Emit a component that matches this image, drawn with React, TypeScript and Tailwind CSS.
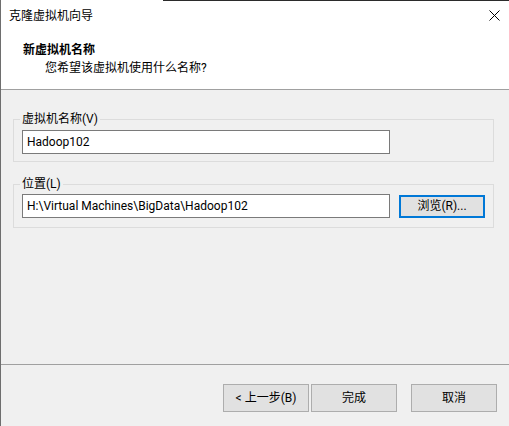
import React from 'react';

const font = { fontFamily: 'Roboto, "Noto Sans CJK SC", sans-serif' };

const CloseIcon = () => (
  <svg width="11" height="11" viewBox="0 0 11 11" className="block">
    <path d="M0.5 0.5 L10.5 10.5 M10.5 0.5 L0.5 10.5" stroke="#000" strokeWidth="1" fill="none" />
  </svg>
);

const DialogButton: React.FC<{ label: string; className?: string }> = ({ label, className }) => (
  <button
    type="button"
    className={`h-[28px] w-[86px] bg-[#e1e1e1] border border-[#adadad] text-[12px] leading-none text-black ${className ?? ''}`}
  >
    {label}
  </button>
);

const App: React.FC = () => {
  return (
    <div
      className="w-[509px] h-[426px] bg-[#f0f0f0] border-l border-[#6e6e6e] flex flex-col text-[12px] leading-[16px] text-black overflow-hidden"
      style={font}
    >
      {/* top edge */}
      <div className="h-px flex shrink-0">
        <div className="w-[162px] bg-white" />
        <div className="flex-1 bg-[#2b2b2b]" />
      </div>

      {/* title bar */}
      <div className="h-[29px] bg-white flex items-center justify-between pl-[8px] pr-[9px] shrink-0">
        <span>克隆虚拟机向导</span>
        <CloseIcon />
      </div>

      {/* wizard header */}
      <div className="bg-white pt-[12px] pb-[13px] shrink-0">
        <div className="pl-[22px] font-bold">新虚拟机名称</div>
        <div className="pl-[44px] mt-[2px]">您希望该虚拟机使用什么名称?</div>
      </div>
      <div className="h-px bg-[#a0a0a0] shrink-0" />

      {/* content */}
      <div className="flex flex-col gap-[14px] mt-[21px] ml-[12px] w-[481px]">
        <fieldset className="border border-[#dcdcdc] pl-[8px] pt-[3px] pb-[7px]">
          <legend className="px-[2px] -ml-[2px]">虚拟机名称(V)</legend>
          <div className="w-[368px] h-[24px] bg-white border border-[#7a7a7a] flex items-center pl-[4px]">
            Hadoop102
          </div>
        </fieldset>

        <fieldset className="border border-[#dcdcdc] pl-[8px] pt-[2px] pb-[9px]">
          <legend className="px-[2px] -ml-[2px]">位置(L)</legend>
          <div className="flex items-center gap-[9px]">
            <div className="w-[368px] h-[24px] bg-white border border-[#7a7a7a] flex items-center pl-[4px]">
              H:\Virtual Machines\BigData\Hadoop102
            </div>
            <button
              type="button"
              className="w-[86px] h-[23px] bg-[#e1e1e1] border-2 border-[#0078d7] text-[12px] leading-none"
            >
              浏览(R)...
            </button>
          </div>
        </fieldset>
      </div>

      <div className="flex-1" />

      {/* footer */}
      <div className="h-px bg-[#a0a0a0] shrink-0" />
      <div className="flex justify-end items-center pt-[19px] pb-[14px] pr-[12px] shrink-0">
        <DialogButton label="< 上一步(B)" />
        <DialogButton label="完成" className="ml-[2px]" />
        <DialogButton label="取消" className="ml-[14px]" />
      </div>
    </div>
  );
};

export default App;
